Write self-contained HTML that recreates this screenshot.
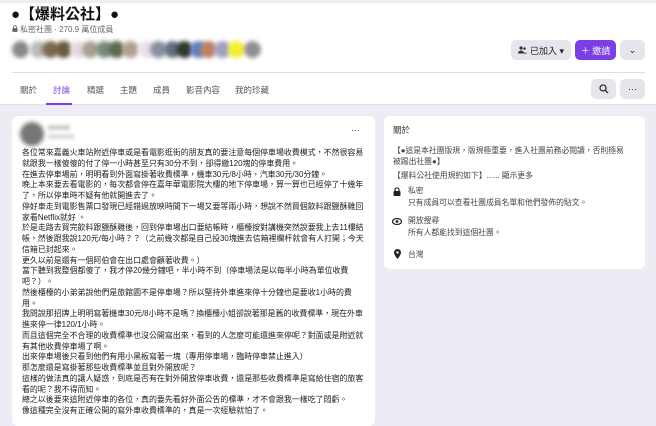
<!DOCTYPE html><html><head><meta charset="utf-8"><style>
*{margin:0;padding:0;box-sizing:border-box}
body{width:656px;height:418px;overflow:hidden;background:#efebf5;font-family:"Liberation Sans","Noto Sans CJK TC",sans-serif;position:relative}
.a{position:absolute}
.hdr{left:0;top:0;width:656px;height:105px;background:#fff;border-top:3px solid #eee;border-bottom:1px solid #e2dde9}
.btn{position:absolute;background:#e4e6eb;border-radius:5px;height:20px;font-size:9px;color:#222;display:flex;align-items:center;justify-content:center}
.card{background:#fff;border-radius:6px;position:absolute}
.post{font-size:7.95px;line-height:10.75px;color:#1c1c1c;white-space:nowrap}
.tab{position:absolute;top:84px;font-size:8.5px;color:#555}
.r{font-size:7.8px;color:#444;position:absolute;white-space:nowrap}
.blob{position:absolute;top:41px;width:17px;height:17px;border-radius:50%;filter:blur(2px)}
</style></head><body>
<div class="a hdr"></div>
<div class="a" style="left:11px;top:3px;font-size:15px;font-weight:bold;color:#111">●【爆料公社】●</div>
<svg class="a" style="left:12px;top:25px" width="6" height="7" viewBox="0 0 8 9"><path d="M2 4V2.8a2 2 0 014 0V4" fill="none" stroke="#666" stroke-width="1.2"/><rect x="0.5" y="4" width="7" height="5" rx="1" fill="#666"/></svg>
<div class="a" style="left:20px;top:24px;font-size:8px;color:#666">私密社團 · 270.9 萬位成員</div>
<div class="blob" style="left:12px;background:#888"></div>
<div class="blob" style="left:30px;background:#bbb"></div>
<div class="blob" style="left:42px;background:#7a6a50"></div>
<div class="blob" style="left:55px;background:#6a5a40"></div>
<div class="blob" style="left:70px;background:#e8d8e0"></div>
<div class="blob" style="left:82px;background:#aaa090"></div>
<div class="blob" style="left:96px;background:#7a8a80"></div>
<div class="blob" style="left:108px;background:#5a6a50"></div>
<div class="blob" style="left:122px;background:#b0a090"></div>
<div class="blob" style="left:138px;background:#e8e0ea"></div>
<div class="blob" style="left:150px;background:#8890a0"></div>
<div class="blob" style="left:164px;background:#607080"></div>
<div class="blob" style="left:176px;background:#303830"></div>
<div class="blob" style="left:190px;background:#6080c0"></div>
<div class="blob" style="left:200px;background:#c08060"></div>
<div class="blob" style="left:214px;background:#a0a0c0"></div>
<div class="blob" style="left:228px;background:#f0f030"></div>
<div class="blob" style="left:244px;background:#909090"></div>
<div class="btn" style="left:511px;top:40px;width:60px"><svg width="9" height="8" viewBox="0 0 9 8" style="margin-right:3px"><circle cx="3" cy="2" r="1.6" fill="#333"/><circle cx="6.5" cy="2.5" r="1.3" fill="#333"/><path d="M0 7.5a3 3 0 016 0zM5 7.5a2.5 2.5 0 014 0z" fill="#333"/></svg>已加入 ▾</div>
<div class="btn" style="left:575px;top:40px;width:41px;background:#7b3fe4;color:#fff">＋ 邀請</div>
<div class="btn" style="left:620px;top:40px;width:25px">⌄</div>
<div class="a" style="left:12px;top:72px;width:633px;height:1px;background:#ddd"></div>
<div class="tab" style="left:20px">關於</div>
<div class="tab" style="left:53px;color:#7b3fe4">討論</div>
<div class="a" style="left:46px;top:103px;width:26px;height:2px;background:#7b3fe4"></div>
<div class="tab" style="left:87px">精選</div>
<div class="tab" style="left:120px">主題</div>
<div class="tab" style="left:153px">成員</div>
<div class="tab" style="left:186px">影音內容</div>
<div class="tab" style="left:235px">我的珍藏</div>
<div class="btn" style="left:591px;top:79px;width:25px">
<svg width="10" height="10" viewBox="0 0 10 10"><circle cx="4" cy="4" r="3" fill="none" stroke="#333" stroke-width="1.3"/><path d="M6.2 6.2L9 9" stroke="#333" stroke-width="1.4"/></svg></div>
<div class="btn" style="left:620px;top:79px;width:25px">···</div>

<div class="card" style="left:12px;top:116px;width:363px;height:310px"></div>
<div class="a" style="left:20px;top:122px;width:24px;height:24px;border-radius:50%;background:#777;filter:blur(2px)"></div>
<div class="a" style="left:48px;top:125px;width:22px;height:5px;background:#ccc;filter:blur(1.5px)"></div>
<div class="a" style="left:48px;top:134px;width:26px;height:5px;background:#ddd;filter:blur(1.5px)"></div>
<div class="a" style="left:351px;top:125px;font-size:9px;color:#555">···</div>
<div class="a post" style="left:22px;top:148px">各位常來嘉義火車站附近停車或是看電影逛街的朋友真的要注意每個停車場收費模式，不然很容易<br>就跟我一樣傻傻的付了停一小時甚至只有30分不到，卻得繳120塊的停車費用。<br>在進去停車場前，明明看到外面寫掛著收費標準，機車30元/8小時，汽車30元/30分鐘。<br>晚上本來要去看電影的，每次都會停在嘉年華電影院大樓的地下停車場，算一算也已經停了十幾年<br>了，所以停車時不疑有他就開進去了。<br>停好車走到電影售票口發現已經錯過放映時間下一場又要等兩小時，想說不然買個飲料跟鹽酥雞回<br>家看Netflix就好 。<br>於是走路去買完飲料跟鹽酥雞後，回到停車場出口要結帳時，櫃檯按對講機突然說要我上去11樓結<br>帳，然後跟我說120元/每小時？？（之前幾次都是自己投30塊進去信箱裡欄杆就會有人打開；今天<br>信箱已封起來。<br>更久以前是還有一個阿伯會在出口處會顧著收費。）<br>當下聽到我整個都傻了，我才停20幾分鐘吧，半小時不到（停車場法是以每半小時為單位收費<br>吧？）。<br>然後櫃檯的小弟弟說他們是旅館園不是停車場？所以堅持外車進來停十分鐘也是要收1小時的費<br>用。<br>我問說那招牌上明明寫著機車30元/8小時不是嗎？換櫃檯小姐卻說著那是舊的收費標準，現在外車<br>進來停一律120/1小時。<br>而且這個完全不合理的收費標準也沒公開寫出來，看到的人怎麼可能還進來停呢？對面或是附近就<br>有其他收費停車場了啊。<br>出來停車場後只看到他們有用小黑板寫著一塊（專用停車場，臨時停車禁止進入）<br>那怎麼還是寫掛著那些收費標準並且對外開放呢？<br>這樣的做法真的讓人疑惑，到底是否有在對外開放停車收費，還是那些收費標準是寫給住宿的旅客<br>看的呢？我不得而知。<br>總之以後要來這附近停車的各位，真的要先看好外面公告的標準，才不會跟我一樣吃了悶虧。<br>像這種完全沒有正確公開的寫外車收費標準的，真是一次經驗就怕了。</div>

<div class="card" style="left:384px;top:116px;width:261px;height:153px"></div>
<div class="r" style="left:393px;top:124px;font-size:8.5px;color:#333">關於</div>
<div class="r" style="left:393px;top:145px;line-height:11px">【●這是本社團版規，版規極重要，進入社團前務必閱讀，否則極易<br>被踢出社團●】</div>
<div class="r" style="left:393px;top:170px">【爆料公社使用規約如下】...... 顯示更多</div>
<svg class="a" style="left:393px;top:187px" width="8" height="9" viewBox="0 0 8 9"><path d="M2 4V2.8a2 2 0 014 0V4" fill="none" stroke="#222" stroke-width="1.2"/><rect x="0.5" y="4" width="7" height="5" rx="1" fill="#222"/></svg>
<div class="r" style="left:408px;top:185px;line-height:12px">私密<br>只有成員可以查看社團成員名單和他們發佈的貼文。</div>
<svg class="a" style="left:392px;top:218px" width="10" height="7" viewBox="0 0 10 7"><ellipse cx="5" cy="3.5" rx="4.5" ry="3" fill="none" stroke="#222" stroke-width="1.2"/><circle cx="5" cy="3.5" r="1.4" fill="#222"/></svg>
<div class="r" style="left:408px;top:215px;line-height:12px">開放搜尋<br>所有人都能找到這個社團。</div>
<svg class="a" style="left:394px;top:249px" width="7" height="10" viewBox="0 0 7 10"><path d="M3.5 0A3.5 3.5 0 000 3.5C0 6 3.5 10 3.5 10S7 6 7 3.5A3.5 3.5 0 003.5 0z" fill="#222"/><circle cx="3.5" cy="3.5" r="1.2" fill="#fff"/></svg>
<div class="r" style="left:408px;top:249px">台灣</div>
</body></html>
